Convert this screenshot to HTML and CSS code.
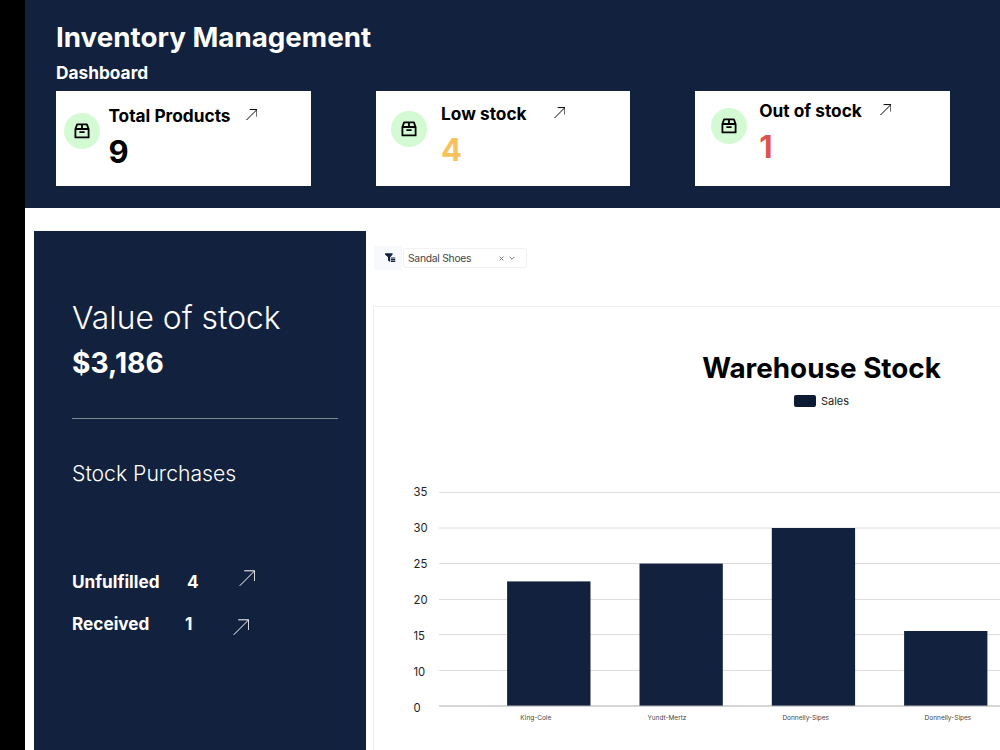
FILE: index.html
```html
<!DOCTYPE html>
<html lang="en">
<head>
    <meta charset="UTF-8">
    <meta name="viewport" content="width=device-width, initial-scale=1.0">
    <title>Inventory Management</title>
    <link rel="stylesheet" href="styles.css">
</head>
<body>
    <!-- shared icons -->
    <svg class="icon-defs" width="0" height="0">
        <symbol id="icon-box" viewBox="0 0 16 16">
            <path d="M1.4 6 3.1 1.4h9.8L14.6 6v8.4H1.4zM1.4 6h13.2M8 1.4V6M5.4 9.2h5.2" fill="none" stroke="currentColor" stroke-width="1.8" stroke-linejoin="round"/>
        </symbol>
        <symbol id="icon-arrow" viewBox="0 0 12 12">
            <path d="M.5 11.5 11.4.6M3.8.6h7.6v7.4" fill="none" stroke="currentColor" vector-effect="non-scaling-stroke"/>
        </symbol>
    </svg>

    <div class="page">
        <header class="header">
            <h1>Inventory Management</h1>
            <h2>Dashboard</h2>
            <div class="cards">
                <div class="card total">
                    <span class="card-icon"><svg><use href="#icon-box"/></svg></span>
                    <div>
                        <div class="card-label"><span>Total Products</span><svg><use href="#icon-arrow"/></svg></div>
                        <div class="card-value">9</div>
                    </div>
                </div>
                <div class="card low">
                    <span class="card-icon"><svg><use href="#icon-box"/></svg></span>
                    <div>
                        <div class="card-label"><span>Low stock</span><svg><use href="#icon-arrow"/></svg></div>
                        <div class="card-value">4</div>
                    </div>
                </div>
                <div class="card out">
                    <span class="card-icon"><svg><use href="#icon-box"/></svg></span>
                    <div>
                        <div class="card-label"><span>Out of stock</span><svg><use href="#icon-arrow"/></svg></div>
                        <div class="card-value">1</div>
                    </div>
                </div>
            </div>
        </header>

        <main class="content">
            <aside class="summary">
                <div class="value-title">Value of stock</div>
                <div class="value-amount">$3,186</div>
                <hr>
                <div class="purchases-title">Stock Purchases</div>
                <div class="purchase unfulfilled">
                    <span class="purchase-name">Unfulfilled</span>
                    <span class="purchase-count">4</span>
                    <svg><use href="#icon-arrow"/></svg>
                </div>
                <div class="purchase received">
                    <span class="purchase-name">Received</span>
                    <span class="purchase-count">1</span>
                    <svg><use href="#icon-arrow"/></svg>
                </div>
            </aside>

            <section class="stock">
                <div class="filter">
                    <span class="filter-icon">
                        <svg viewBox="0 0 11 10">
                            <path d="M0 .3h7.6v1.3L5.2 4.3V9L3 7.4V4.3L0 1.6z"/>
                            <path d="M6 4.4h4.2v1.2H6zM6 6.1h4.2v1.2H6zM6 7.8h4.2V9H6z"/>
                        </svg>
                    </span>
                    <div class="select">
                        <span class="select-text">Sandal Shoes</span>
                        <svg class="clear" viewBox="0 0 5 5"><path d="M.6.6l3.8 3.8M4.4.6.6 4.4"/></svg>
                        <svg class="chevron" viewBox="0 0 6 4"><path d="M.6.8 3 3.2 5.4.8"/></svg>
                    </div>
                </div>

                <div class="chart-panel">
                    <div class="chart-title">Warehouse Stock</div>
                    <div class="legend"><span class="swatch"></span>Sales</div>
                    <svg class="chart" width="626" height="260" viewBox="374 480 626 260">
                        <g class="grid">
                            <path d="M439 492.4H1000M439 528H1000M439 563.5H1000M439 599.4H1000M439 634.6H1000M439 670.4H1000"/>
                        </g>
                        <g class="bars">
                            <rect x="507.1" y="581.4" width="83.4" height="124.6"/>
                            <rect x="639.5" y="563.6" width="83.3" height="142.4"/>
                            <rect x="771.8" y="528" width="83.3" height="178"/>
                            <rect x="904.1" y="631" width="83.3" height="75"/>
                        </g>
                        <path class="baseline" d="M439 706H1000"/>
                        <g class="y-labels">
                            <text x="413.5" y="495.6">35</text>
                            <text x="413.5" y="531.6">30</text>
                            <text x="413.5" y="567.6">25</text>
                            <text x="413.5" y="603.6">20</text>
                            <text x="413.5" y="639.6">15</text>
                            <text x="413.5" y="675.6">10</text>
                            <text x="413.5" y="711.6">0</text>
                        </g>
                        <g class="x-labels">
                            <text x="535.8" y="720">King-Cole</text>
                            <text x="667" y="720">Yundt-Mertz</text>
                            <text x="805.7" y="720">Donnelly-Sipes</text>
                            <text x="947.9" y="720">Donnelly-Sipes</text>
                        </g>
                    </svg>
                </div>
            </section>
        </main>
    </div>
</body>
</html>
```
FILE: styles.css
```css
* {
    box-sizing: border-box;
}

body {
    margin: 0;
    height: 750px;
    overflow: hidden;
    background-color: #000;
    font-family: Inter, "Liberation Sans", sans-serif;
}

.icon-defs {
    display: block;
}

.page {
    margin-left: 25px;
    height: 750px;
    background-color: #fff;
    display: flex;
    flex-direction: column;
}

/* header */
.header {
    height: 208px;
    flex: none;
    padding: 19px 0 0 31px;
    background-color: #12223e;
    color: #fff;
}

h1 {
    margin: 0;
    font-size: 27.75px;
    line-height: 36px;
    font-weight: 700;
}

h2 {
    margin: 6px 0 6px;
    font-size: 17.3px;
    line-height: 24px;
    font-weight: 700;
}

.cards {
    display: flex;
    gap: 65px;
}

.card {
    flex: none;
    display: flex;
    align-items: flex-start;
    width: 254.7px;
    height: 95px;
    background-color: #fff;
    color: #000;
}

.card-icon {
    flex: none;
    display: flex;
    align-items: center;
    justify-content: center;
    width: 36px;
    height: 36px;
    margin-top: 8.5px;
    border-radius: 50%;
    background-color: #d3fad3;
}

.card-icon svg {
    width: 16px;
    height: 16px;
}

.card-label {
    display: flex;
    align-items: center;
    font-size: 17.3px;
    line-height: 24px;
    font-weight: 700;
}

.card-label span {
    flex: none;
    white-space: nowrap;
}

.card-label svg {
    flex: none;
    width: 11.5px;
    height: 11.5px;
    margin-bottom: 3px;
}

.card-value {
    margin-top: 6px;
    font-size: 31px;
    line-height: 36px;
    font-weight: 700;
}

.total {
    padding: 13px 0 0 8px;
    gap: 8.4px;
}

.total .card-label span {
    width: 137.5px;
}

.low {
    padding: 11px 0 0 15px;
    gap: 14.4px;
}

.low .card-label span {
    width: 112.5px;
}

.low .card-value {
    color: #f8c15c;
}

.out {
    padding: 8px 0 0 15.3px;
    gap: 12.5px;
}

.out .card-label span {
    width: 120.5px;
}

.out .card-value {
    color: #dc5450;
}

/* content */
.content {
    flex: 1;
    min-height: 0;
    display: flex;
    padding-left: 9px;
}

.summary {
    flex: none;
    width: 332px;
    margin-top: 23.4px;
    padding: 65.6px 28px 0 38px;
    background-color: #12223e;
    color: #fff;
}

.value-title {
    font-size: 31.8px;
    line-height: 42px;
    font-weight: 300;
}

.value-amount {
    margin-top: 6px;
    font-size: 28.2px;
    line-height: 36px;
    font-weight: 700;
}

hr {
    height: 1px;
    margin: 37px 0 40px;
    border: none;
    background-color: #7f8995;
}

.purchases-title {
    font-size: 21.2px;
    line-height: 28px;
    font-weight: 300;
    margin-bottom: 83px;
}

.purchase {
    display: flex;
    align-items: center;
    height: 24px;
    font-size: 17.2px;
    font-weight: 700;
}

.purchase svg {
    width: 16.5px;
    height: 16.5px;
}

.purchase-name {
    width: 115px;
}

.purchase-count {
    width: 51.5px;
}

.unfulfilled svg {
    margin-bottom: 8px;
}

.received {
    margin-top: 18px;
}

.received .purchase-name {
    width: 113px;
}

.received .purchase-count {
    width: 47.5px;
}

.received svg {
    margin-top: 7px;
}

.stock {
    flex: 1;
    min-width: 0;
    display: flex;
    flex-direction: column;
    padding: 38px 0 0 7px;
}

.filter {
    display: flex;
    align-items: center;
    gap: 1px;
    padding-left: 1px;
    height: 24px;
}

.filter-icon {
    display: flex;
    align-items: center;
    justify-content: center;
    width: 28px;
    height: 24px;
    padding-left: 5px;
    background-color: #f8f9fc;
}

.filter-icon svg {
    width: 11px;
    height: 10px;
    fill: #12223e;
}

.select {
    display: flex;
    align-items: center;
    width: 124px;
    height: 20px;
    padding: 0 11px 0 4px;
    border: 1px solid #f0f1f2;
    border-radius: 3px;
    font-size: 10.3px;
    letter-spacing: -0.25px;
    color: #444;
}

.select-text {
    flex: 1;
}

.select svg {
    fill: none;
    stroke: #777;
    stroke-width: 1;
}

.clear {
    width: 5px;
    height: 5px;
}

.chevron {
    width: 6px;
    height: 4px;
    margin-left: 5px;
}

/* chart */
.chart-panel {
    flex: 1;
    display: flex;
    flex-direction: column;
    align-items: center;
    margin-top: 36px;
    padding-top: 43px;
    border: 1px solid #eee;
    border-width: 1px 0 0 1px;
    color: #000;
}

.chart-title {
    margin-left: 269px;
    font-size: 27.8px;
    line-height: 36px;
    font-weight: 700;
}

.legend {
    display: flex;
    align-items: center;
    gap: 5px;
    margin: 7px 0 0 269px;
    font-size: 11px;
    line-height: 16px;
    color: #222;
}

.swatch {
    width: 22px;
    height: 12px;
    border-radius: 2px;
    background-color: #0d1a33;
}

.chart {
    flex: none;
    margin-top: 71px;
}

.grid path {
    stroke: #dcdcdc;
}

.baseline {
    stroke: #a9acaf;
}

.bars {
    fill: #12223e;
}

.y-labels {
    font-size: 11.3px;
    fill: #222;
}

.x-labels {
    font-size: 6.5px;
    fill: #444;
    text-anchor: middle;
}
```
